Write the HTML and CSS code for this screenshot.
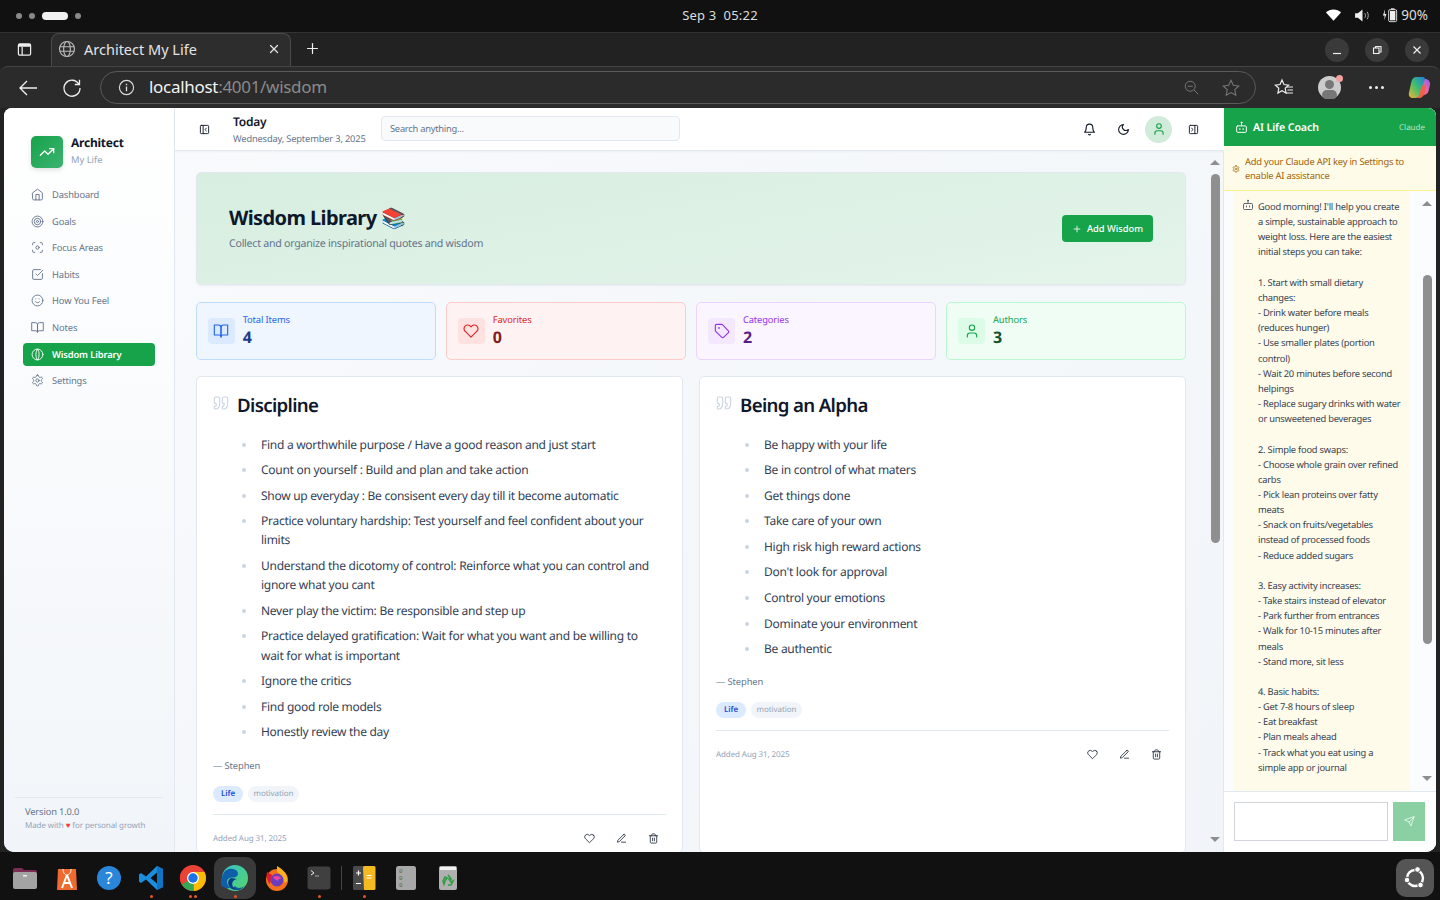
FILE: index.html
```html
<!DOCTYPE html>
<html lang="en">

<head>
    <meta charset="UTF-8">
    <meta name="viewport" content="width=device-width, initial-scale=1.0">
    <title>Architect My Life</title>
    <link rel="stylesheet" href="styles.css">
</head>

<body>

    <!-- Icon sprite -->
    <svg class="sprite" aria-hidden="true">
        <symbol id="i-home" viewBox="0 0 24 24"><path d="m3 9 9-7 9 7v11a2 2 0 0 1-2 2H5a2 2 0 0 1-2-2z"/><path d="M9 22V12h6v10"/></symbol>
        <symbol id="i-target" viewBox="0 0 24 24"><circle cx="12" cy="12" r="10"/><circle cx="12" cy="12" r="6"/><circle cx="12" cy="12" r="2"/></symbol>
        <symbol id="i-focus" viewBox="0 0 24 24"><circle cx="12" cy="12" r="3"/><path d="M3 7V5a2 2 0 0 1 2-2h2"/><path d="M17 3h2a2 2 0 0 1 2 2v2"/><path d="M21 17v2a2 2 0 0 1-2 2h-2"/><path d="M7 21H5a2 2 0 0 1-2-2v-2"/></symbol>
        <symbol id="i-check" viewBox="0 0 24 24"><path d="M21 10.5V19a2 2 0 0 1-2 2H5a2 2 0 0 1-2-2V5a2 2 0 0 1 2-2h12.5"/><path d="m9 11 3 3L22 4"/></symbol>
        <symbol id="i-smile" viewBox="0 0 24 24"><circle cx="12" cy="12" r="10"/><path d="M8 14s1.5 2 4 2 4-2 4-2"/><path d="M9 9h.01"/><path d="M15 9h.01"/></symbol>
        <symbol id="i-book" viewBox="0 0 24 24"><path d="M2 3h6a4 4 0 0 1 4 4v14a3 3 0 0 0-3-3H2z"/><path d="M22 3h-6a4 4 0 0 0-4 4v14a3 3 0 0 1 3-3h7z"/></symbol>
        <symbol id="i-lens" viewBox="0 0 24 24"><circle cx="12" cy="12" r="10"/><path d="M12 2c-4 4-4 16 0 20"/><path d="M12 2c4 4 4 16 0 20"/></symbol>
        <symbol id="i-gear" viewBox="0 0 24 24"><path d="M12.22 2h-.44a2 2 0 0 0-2 2v.18a2 2 0 0 1-1 1.73l-.43.25a2 2 0 0 1-2 0l-.15-.08a2 2 0 0 0-2.73.73l-.22.38a2 2 0 0 0 .73 2.73l.15.1a2 2 0 0 1 1 1.72v.51a2 2 0 0 1-1 1.74l-.15.09a2 2 0 0 0-.73 2.73l.22.38a2 2 0 0 0 2.73.73l.15-.08a2 2 0 0 1 2 0l.43.25a2 2 0 0 1 1 1.73V20a2 2 0 0 0 2 2h.44a2 2 0 0 0 2-2v-.18a2 2 0 0 1 1-1.73l.43-.25a2 2 0 0 1 2 0l.15.08a2 2 0 0 0 2.73-.73l.22-.39a2 2 0 0 0-.73-2.73l-.15-.08a2 2 0 0 1-1-1.74v-.5a2 2 0 0 1 1-1.74l.15-.09a2 2 0 0 0 .73-2.73l-.22-.38a2 2 0 0 0-2.73-.73l-.15.08a2 2 0 0 1-2 0l-.43-.25a2 2 0 0 1-1-1.73V4a2 2 0 0 0-2-2z"/><circle cx="12" cy="12" r="3"/></symbol>
        <symbol id="i-trend" viewBox="0 0 24 24"><path d="M22 7l-8.5 8.5-5-5L2 17"/><path d="M16 7h6v6"/></symbol>
        <symbol id="i-panel-left" viewBox="0 0 24 24"><rect x="3" y="3" width="18" height="18" rx="2"/><path d="M9 3v18"/><path d="m16 15-3-3 3-3"/></symbol>
        <symbol id="i-panel-right" viewBox="0 0 24 24"><rect x="3" y="3" width="18" height="18" rx="2"/><path d="M15 3v18"/><path d="m8 9 3 3-3 3"/></symbol>
        <symbol id="i-bell" viewBox="0 0 24 24"><path d="M6 8a6 6 0 0 1 12 0c0 7 3 9 3 9H3s3-2 3-9"/><path d="M10.3 21a1.94 1.94 0 0 0 3.4 0"/></symbol>
        <symbol id="i-moon" viewBox="0 0 24 24"><path d="M12 3a6 6 0 0 0 9 9 9 9 0 1 1-9-9Z"/></symbol>
        <symbol id="i-user" viewBox="0 0 24 24"><path d="M19 21v-2a4 4 0 0 0-4-4H9a4 4 0 0 0-4 4v2"/><circle cx="12" cy="7" r="4"/></symbol>
        <symbol id="i-heart" viewBox="0 0 24 24"><path d="M20.84 4.61a5.5 5.5 0 0 0-7.78 0L12 5.67l-1.06-1.06a5.5 5.5 0 0 0-7.78 7.78l1.06 1.06L12 21.23l7.78-7.78 1.06-1.06a5.5 5.5 0 0 0 0-7.78z"/></symbol>
        <symbol id="i-tag" viewBox="0 0 24 24"><path d="M12.586 2.586A2 2 0 0 0 11.172 2H4a2 2 0 0 0-2 2v7.172a2 2 0 0 0 .586 1.414l8.704 8.704a2.426 2.426 0 0 0 3.42 0l6.58-6.58a2.426 2.426 0 0 0 0-3.42z"/><circle cx="7.5" cy="7.5" r=".5"/></symbol>
        <symbol id="i-plus" viewBox="0 0 24 24"><path d="M5 12h14"/><path d="M12 5v14"/></symbol>
        <symbol id="i-bot" viewBox="0 0 24 24"><path d="M12 8V4"/><circle cx="12" cy="3" r="1"/><rect x="3" y="9" width="18" height="12" rx="2"/><path d="M15 14v2"/><path d="M9 14v2"/></symbol>
        <symbol id="i-quote" viewBox="0 0 24 24"><path d="M3 21c3 0 7-1 7-8V5c0-1.25-.756-2.017-2-2H4c-1.25 0-2 .75-2 1.972V11c0 1.25.75 2 2 2 1 0 1 0 1 1v1c0 1-1 2-2 2s-1 .008-1 1.031V20c0 1 0 1 1 1z"/><path d="M15 21c3 0 7-1 7-8V5c0-1.25-.757-2.017-2-2h-4c-1.25 0-2 .75-2 1.972V11c0 1.25.75 2 2 2h.75c0 2.25.25 4-2.75 4v3c0 1 0 1 1 1z"/></symbol>
        <symbol id="i-pen" viewBox="0 0 24 24"><path d="M12 20h9"/><path d="M16.5 3.5a2.121 2.121 0 0 1 3 3L7 19l-4 1 1-4L16.5 3.5z"/></symbol>
        <symbol id="i-trash" viewBox="0 0 24 24"><path d="M3 6h18"/><path d="M19 6v14c0 1-1 2-2 2H7c-1 0-2-1-2-2V6"/><path d="M8 6V4c0-1 1-2 2-2h4c1 0 2 1 2 2v2"/><path d="M10 11v6"/><path d="M14 11v6"/></symbol>
        <symbol id="i-send" viewBox="0 0 24 24"><path d="m22 2-7 20-4-9-9-4Z"/><path d="M22 2 11 13"/></symbol>
        <symbol id="i-x" viewBox="0 0 24 24"><path d="M5 5l14 14"/><path d="M19 5 5 19"/></symbol>
    </svg>

    <!-- Desktop top bar -->
    <div class="topbar">
        <div class="workspaces"><span class="ws-dot"></span><span class="ws-dot"></span><span class="ws-pill"></span><span class="ws-dot"></span></div>
        <div class="clock">Sep 3&nbsp; 05:22</div>
        <div class="status">
            <svg class="st-wifi" viewBox="0 0 16 12"><path d="M0 3.2C2 1.3 5 0 8 0s6 1.3 8 3.2L8 12z" fill="#fff"/></svg>
            <svg class="st-vol" viewBox="0 0 16 14"><path d="M0 4.5h3L8 .5v13l-5-4H0z" fill="#eee"/><path d="M10.5 4.5c1 1.5 1 3.500 0 5M13 3c1.600 2.500 1.600 5.500 0 8" fill="none" stroke="#bbb"/></svg>
            <svg class="st-bat" viewBox="0 0 18 16"><path d="M3.500 1.500 1 8.500h2l-.5 5.500L5 7H3z" fill="#eee"/><rect x="7.500" y="2" width="9" height="13.500" rx="1.500" fill="none" stroke="#eee"/><rect x="10" y=".5" width="4" height="1.500" fill="#eee"/><rect x="9" y="3.500" width="6" height="10.500" fill="#eee"/></svg>
            <span class="st-pct">90%</span>
        </div>
    </div>

    <!-- Browser tabs -->
    <div class="tabstrip">
        <svg class="tab-side" viewBox="0 0 16 16"><rect x="1.500" y="2" width="13" height="12" rx="1.500" fill="none" stroke="#eee" stroke-width="1.300"/><path d="M1.500 3.500a1.500 1.500 0 0 1 1.500-1.500h10a1.500 1.500 0 0 1 1.500 1.500V5h-13z" fill="#eee"/><path d="M5.500 5v9" stroke="#eee" stroke-width="1.300"/></svg>
        <div class="tab">
            <svg class="tab-globe" viewBox="0 0 24 24"><circle cx="12" cy="12" r="10"/><ellipse cx="12" cy="12" rx="4.500" ry="10"/><path d="M2.500 9h19M2.500 15h19"/></svg>
            <span class="tab-title">Architect My Life</span>
            <svg class="tab-x icon"><use href="#i-x"/></svg>
        </div>
        <svg class="tab-new icon"><use href="#i-plus"/></svg>
        <div class="winbtns">
            <span class="winbtn"><svg viewBox="0 0 12 12"><path d="M2 9.500h8" stroke="#eee" stroke-width="1.200"/></svg></span>
            <span class="winbtn"><svg viewBox="0 0 12 12"><rect x="2.500" y="4" width="5.500" height="5.500" fill="none" stroke="#eee" stroke-width="1.100"/><path d="M4.500 4V2.500H10V8H8" fill="none" stroke="#eee" stroke-width="1.100"/></svg></span>
            <span class="winbtn"><svg viewBox="0 0 12 12"><path d="M2.500 2.500l7 7M9.500 2.500l-7 7" stroke="#eee" stroke-width="1.200"/></svg></span>
        </div>
    </div>

    <!-- Browser toolbar -->
    <div class="frame">
        <div class="toolbar">
            <svg class="tb-back" viewBox="0 0 20 20"><path d="M19 10H2M9 3l-7 7 7 7" fill="none" stroke="#eee" stroke-width="1.400"/></svg>
            <svg class="tb-reload" viewBox="0 0 20 20"><path d="M16.800 6A8 8 0 1 0 18 10M17.500 1.800V6.500H12.800" fill="none" stroke="#eee" stroke-width="1.300"/></svg>
            <div class="addressbar">
                <svg class="ab-info" viewBox="0 0 18 18"><circle cx="9" cy="9" r="7.500" fill="none" stroke="#ddd" stroke-width="1.200"/><path d="M9 8v5M9 5v1.500" stroke="#ddd" stroke-width="1.400"/></svg>
                <span class="ab-url"><span class="ab-host">localhost</span>:4001/wisdom</span>
                <svg class="ab-zoom" viewBox="0 0 18 18"><circle cx="7.500" cy="7.500" r="6" fill="none" stroke="#777" stroke-width="1.200"/><path d="M4.500 7.500h6M12 12l5 5" stroke="#777" stroke-width="1.200"/></svg>
                <svg class="ab-star" viewBox="0 0 20 20"><path d="M10 1.500l2.600 5.500 6 .8-4.400 4.100 1.100 6L10 15l-5.300 2.900 1.100-6L1.400 7.800l6-.8z" fill="none" stroke="#777" stroke-width="1.200"/></svg>
            </div>
            <svg class="tb-favs" viewBox="0 0 20 20"><path d="M8 2l2 4.500 4.600.6-3.400 3.200.9 4.700L8 12.700 3.900 15l.9-4.700L1.400 7.100 6 6.500z" fill="none" stroke="#eee" stroke-width="1.200"/><path d="M13 9h6M13.500 12h5.500M12 15h7" stroke="#eee" stroke-width="1.100"/></svg>
            <span class="tb-avatar"><span class="av-head"></span><span class="av-body"></span><span class="av-dot"></span></span>
            <span class="tb-dots"><i></i><i></i><i></i></span>
            <svg class="tb-copilot" viewBox="0 0 24 24">
                <defs>
                    <linearGradient id="cp1" x1="0" y1="1" x2="1" y2="0"><stop offset="0" stop-color="#f5b52e"/><stop offset=".5" stop-color="#3ebf6e"/><stop offset="1" stop-color="#1d7fe0"/></linearGradient>
                    <linearGradient id="cp2" x1="0" y1="1" x2="1" y2="0"><stop offset="0" stop-color="#f0533c"/><stop offset=".5" stop-color="#e668a8"/><stop offset="1" stop-color="#8a5cf0"/></linearGradient>
                </defs>
                <path d="M15 3 18 3C21 3 23.500 5.500 23 9L21.500 15.500C20.900 18.500 18.500 20 16 20H11L14 10z" fill="url(#cp2)"/>
                <path d="M9 1h6.500c1.500 0 2.500 1 2 2.500L13 19c-.7 2.500-2.500 4-5 4H5C2 23 .3 20.500 1 17.500L3.500 6C4.200 3 6 1 9 1z" fill="url(#cp1)"/>
                <path d="M14 10h5l-2 8c-.5 2.500-2 4.500-4.500 5h-5c2.500-.5 4-2 4.700-4.500z" fill="#f0604c"/>
            </svg>
        </div>

        <!-- App window -->
        <div class="app">
            <aside class="sidebar">
                <div class="brand">
                    <span class="brand-mark"><svg class="icon"><use href="#i-trend"/></svg></span>
                    <div>
                        <div class="brand-name">Architect</div>
                        <div class="brand-sub">My Life</div>
                    </div>
                </div>
                <nav class="nav">
                    <a class="nav-item"><svg class="icon"><use href="#i-home"/></svg>Dashboard</a>
                    <a class="nav-item"><svg class="icon"><use href="#i-target"/></svg>Goals</a>
                    <a class="nav-item"><svg class="icon"><use href="#i-focus"/></svg>Focus Areas</a>
                    <a class="nav-item"><svg class="icon"><use href="#i-check"/></svg>Habits</a>
                    <a class="nav-item"><svg class="icon"><use href="#i-smile"/></svg>How You Feel</a>
                    <a class="nav-item"><svg class="icon"><use href="#i-book"/></svg>Notes</a>
                    <a class="nav-item active"><svg class="icon"><use href="#i-lens"/></svg>Wisdom Library</a>
                    <a class="nav-item"><svg class="icon"><use href="#i-gear"/></svg>Settings</a>
                </nav>
                <div class="side-foot">
                    <div class="version">Version 1.0.0</div>
                    <div class="made">Made with <span class="made-heart">♥</span> for personal growth</div>
                </div>
            </aside>

            <div class="main">
                <header class="header">
                    <svg class="icon hd-icon hd-panel"><use href="#i-panel-left"/></svg>
                    <div class="today">
                        <div class="today-title">Today</div>
                        <div class="today-date">Wednesday, September 3, 2025</div>
                    </div>
                    <input class="search" type="text" placeholder="Search anything...">
                    <div class="hd-actions">
                        <svg class="icon hd-icon"><use href="#i-bell"/></svg>
                        <svg class="icon hd-icon"><use href="#i-moon"/></svg>
                        <span class="hd-user"><svg class="icon"><use href="#i-user"/></svg></span>
                        <svg class="icon hd-icon"><use href="#i-panel-right"/></svg>
                    </div>
                </header>

                <div class="main-body">
                    <div class="content">
                        <section class="hero">
                            <div>
                                <h1>Wisdom Library 📚</h1>
                                <p>Collect and organize inspirational quotes and wisdom</p>
                            </div>
                            <button class="btn-add"><svg class="icon"><use href="#i-plus"/></svg>Add Wisdom</button>
                        </section>

                        <section class="stats">
                            <div class="stat stat-blue">
                                <span class="stat-icon"><svg class="icon"><use href="#i-book"/></svg></span>
                                <div><div class="stat-label">Total Items</div><div class="stat-value">4</div></div>
                            </div>
                            <div class="stat stat-red">
                                <span class="stat-icon"><svg class="icon"><use href="#i-heart"/></svg></span>
                                <div><div class="stat-label">Favorites</div><div class="stat-value">0</div></div>
                            </div>
                            <div class="stat stat-purple">
                                <span class="stat-icon"><svg class="icon"><use href="#i-tag"/></svg></span>
                                <div><div class="stat-label">Categories</div><div class="stat-value">2</div></div>
                            </div>
                            <div class="stat stat-green">
                                <span class="stat-icon"><svg class="icon"><use href="#i-user"/></svg></span>
                                <div><div class="stat-label">Authors</div><div class="stat-value">3</div></div>
                            </div>
                        </section>

                        <section class="cards">
                            <article class="card">
                                <h2><svg class="icon quote"><use href="#i-quote"/></svg>Discipline</h2>
                                <ul>
                                    <li>Find a worthwhile purpose / Have a good reason and just start</li>
                                    <li>Count on yourself : Build and plan and take action</li>
                                    <li>Show up everyday : Be consisent every day till it become automatic</li>
                                    <li>Practice voluntary hardship: Test yourself and feel confident about your limits</li>
                                    <li>Understand the dicotomy of control: Reinforce what you can control and ignore what you cant</li>
                                    <li>Never play the victim: Be responsible and step up</li>
                                    <li>Practice delayed gratification: Wait for what you want and be willing to wait for what is important</li>
                                    <li>Ignore the critics</li>
                                    <li>Find good role models</li>
                                    <li>Honestly review the day</li>
                                </ul>
                                <div class="author">— Stephen</div>
                                <div class="tags"><span class="tag tag-life">Life</span><span class="tag">motivation</span></div>
                                <div class="card-foot">
                                    <span class="added">Added Aug 31, 2025</span>
                                    <div class="card-actions">
                                        <svg class="icon"><use href="#i-heart"/></svg>
                                        <svg class="icon"><use href="#i-pen"/></svg>
                                        <svg class="icon"><use href="#i-trash"/></svg>
                                    </div>
                                </div>
                            </article>
                            <article class="card">
                                <h2><svg class="icon quote"><use href="#i-quote"/></svg>Being an Alpha</h2>
                                <ul>
                                    <li>Be happy with your life</li>
                                    <li>Be in control of what maters</li>
                                    <li>Get things done</li>
                                    <li>Take care of your own</li>
                                    <li>High risk high reward actions</li>
                                    <li>Don't look for approval</li>
                                    <li>Control your emotions</li>
                                    <li>Dominate your environment</li>
                                    <li>Be authentic</li>
                                </ul>
                                <div class="author">— Stephen</div>
                                <div class="tags"><span class="tag tag-life">Life</span><span class="tag">motivation</span></div>
                                <div class="card-foot">
                                    <span class="added">Added Aug 31, 2025</span>
                                    <div class="card-actions">
                                        <svg class="icon"><use href="#i-heart"/></svg>
                                        <svg class="icon"><use href="#i-pen"/></svg>
                                        <svg class="icon"><use href="#i-trash"/></svg>
                                    </div>
                                </div>
                            </article>
                        </section>
                    </div>
                    <div class="scrollbar scrollbar-main">
                        <span class="arrow-up"></span>
                        <span class="thumb"></span>
                        <span class="arrow-down"></span>
                    </div>
                </div>
            </div>

            <!-- Coach panel -->
            <aside class="coach">
                <div class="coach-head">
                    <svg class="icon"><use href="#i-bot"/></svg>
                    <span class="coach-title">AI Life Coach</span>
                    <span class="coach-model">Claude</span>
                </div>
                <div class="coach-warn">
                    <svg class="icon"><use href="#i-gear"/></svg>
                    <span>Add your Claude API key in Settings to<br>enable AI assistance</span>
                </div>
                <div class="coach-body">
                    <div class="bubble">
                        <svg class="icon"><use href="#i-bot"/></svg>
                        <p>Good morning! I'll help you create
a simple, sustainable approach to
weight loss. Here are the easiest
initial steps you can take:

1. Start with small dietary
changes:
- Drink water before meals
(reduces hunger)
- Use smaller plates (portion
control)
- Wait 20 minutes before second
helpings
- Replace sugary drinks with water
or unsweetened beverages

2. Simple food swaps:
- Choose whole grain over refined
carbs
- Pick lean proteins over fatty
meats
- Snack on fruits/vegetables
instead of processed foods
- Reduce added sugars

3. Easy activity increases:
- Take stairs instead of elevator
- Park further from entrances
- Walk for 10-15 minutes after
meals
- Stand more, sit less

4. Basic habits:
- Get 7-8 hours of sleep
- Eat breakfast
- Plan meals ahead
- Track what you eat using a
simple app or journal</p>
                    </div>
                    <div class="scrollbar scrollbar-coach">
                        <span class="arrow-up"></span>
                        <span class="thumb"></span>
                        <span class="arrow-down"></span>
                    </div>
                </div>
                <div class="coach-input">
                    <textarea class="coach-text"></textarea>
                    <button class="coach-send"><svg class="icon"><use href="#i-send"/></svg></button>
                </div>
            </aside>
        </div>
    </div>

    <!-- Dock -->
    <div class="dock">
        <div class="dock-apps">
            <span class="dock-app">
                <svg viewBox="0 0 28 28"><path d="M2 6a2 2 0 0 1 2-2h7l2 2h11a2 2 0 0 1 2 2v4H2z" fill="#7c2d54"/><rect x="2" y="8" width="24" height="17" rx="2" fill="#a3a3a3"/><rect x="12" y="11" width="4" height="1.500" fill="#eee"/></svg>
            </span>
            <span class="dock-app">
                <svg viewBox="0 0 28 28"><path d="M5 5h18l1 21H4z" fill="#ef6a2e"/><path d="M10 5c0 4 2 6 4 6s4-2 4-6" fill="none" stroke="#fff" stroke-width="1"/><path d="M14 11l-5 13M14 11l5 13M10.500 19h7" fill="none" stroke="#fff" stroke-width="2"/></svg>
            </span>
            <span class="dock-app">
                <svg viewBox="0 0 28 28"><circle cx="14" cy="14" r="12" fill="#2a86d8"/><text x="14" y="20" text-anchor="middle" font-family="Noto Sans" font-size="17" fill="#fff">?</text></svg>
            </span>
            <span class="dock-app has-dot">
                <svg viewBox="0 0 28 28"><path d="M20 2l6 3v18l-6 3-11-10.500L4 19l-2-1.500v-7L4 9l5 3.500zM20 8.500l-6.500 5.500 6.500 5.500z" fill="#1b8ee0"/><path d="M20 2l6 3v18l-6 3z" fill="#0f74c4"/></svg>
            </span>
            <span class="dock-app has-dot2">
                <svg viewBox="0 0 28 28"><circle cx="14" cy="14" r="13" fill="#ea4335"/><path d="M14 14 2.700 20.500A13 13 0 0 1 2.700 7.500z" fill="#ea4335"/><path d="M14 14 2.800 20.500A13 13 0 0 0 14 27h2z" fill="#34a853"/><path d="M14 8h11.500A13 13 0 0 1 15 27z" fill="#fbbc04"/><circle cx="14" cy="14" r="6" fill="#fff"/><circle cx="14" cy="14" r="4.700" fill="#1a73e8"/></svg>
            </span>
            <span class="dock-app dock-active has-dot">
                <svg viewBox="0 0 28 28"><defs><linearGradient id="edge1" x1="0" y1="0" x2="1" y2="1"><stop offset="0" stop-color="#36c3c7"/><stop offset="1" stop-color="#55d46a"/></linearGradient></defs><circle cx="14" cy="14" r="13" fill="url(#edge1)"/><path d="M1 14C2 6 8 4 12 5c5 1 6 5 4 7-3 3-6 0-9 3-2 2-1 8 4 10 4 1.500 9 1 13-3-5 3-9 2-10 0-3 3-15 5-18-8z" fill="#0f5fa8"/><path d="M10 14c-4 2-4 8 1 11 4 1.500 8 1 11-1-5 2-9 1-10-1-1.500-3-1-7 4-8z" fill="#0b3f85"/></svg>
            </span>
            <span class="dock-app">
                <svg viewBox="0 0 28 28"><circle cx="14" cy="16" r="11" fill="#f5701c"/><path d="M14 2c3 2 9 5 10 12 1 5-2 6-4 2-1-4-4-7-6-8z" fill="#fbb31d"/><path d="M4 8c-1 4 0 9 3 12l2-9z" fill="#e6162d"/><circle cx="14" cy="16" r="6.500" fill="#6a3cc0"/><path d="M10 13c3-2 7-1 9 2-2-1-4 0-4 2-2-1-4-2-5-4z" fill="#f0459f"/></svg>
            </span>
            <span class="dock-app has-dot">
                <svg viewBox="0 0 28 28"><rect x="2.500" y="2.500" width="23" height="23" rx="3" fill="#404040"/><path d="M6 6.500 9 9l-3 2" fill="none" stroke="#eee" stroke-width="1"/><path d="M10 12h4" stroke="#aaa" stroke-width="1"/></svg>
            </span>
            <span class="dock-sep"></span>
            <span class="dock-app has-dot">
                <svg viewBox="0 0 28 28"><rect x="3" y="2" width="11.500" height="24" rx="1.500" fill="#4a4a4a"/><path d="M13 3.500a1.500 1.500 0 0 1 1.500-1.500H24a1.500 1.500 0 0 1 1.500 1.500v21a1.500 1.500 0 0 1-1.500 1.500h-10z" fill="#f5b921"/><path d="M6 9h5M8.500 6.500v5M6 19.500h5M16.500 11.500h5M16.500 14h5" stroke="#fff" stroke-width="1.200"/></svg>
            </span>
            <span class="dock-app">
                <svg viewBox="0 0 28 28"><rect x="4" y="2" width="20" height="24" rx="2.500" fill="#a8a8a8"/><text x="7" y="9" font-family="Liberation Mono" font-size="6" fill="#59681f">0</text><text x="7" y="16" font-family="Liberation Mono" font-size="6" fill="#59681f">0</text><text x="7" y="23" font-family="Liberation Mono" font-size="6" fill="#59681f">0</text></svg>
            </span>
            <span class="dock-app">
                <svg viewBox="0 0 28 28"><rect x="5" y="2" width="18" height="24" rx="2" fill="#b0b0b0"/><rect x="6" y="3" width="16" height="3" fill="#f0f0f0"/><path d="M14 11l3 4h-2l2 3 2-1-2 4h-3M10 20l-1-3 2-4 2 1-2 3z" fill="none" stroke="#2f9e44" stroke-width="1.600"/></svg>
            </span>
        </div>
        <span class="dock-grid">
            <svg viewBox="0 0 24 24"><circle cx="12" cy="12" r="8" fill="none" stroke="#fff" stroke-width="2.400"/><circle cx="14.500" cy="3.500" r="2.800" fill="#fff" stroke="#555" stroke-width="1"/><circle cx="4" cy="14" r="2.800" fill="#fff" stroke="#555" stroke-width="1"/><circle cx="17.500" cy="19" r="2.800" fill="#fff" stroke="#555" stroke-width="1"/></svg>
        </span>
    </div>

</body>

</html>
```
FILE: styles.css
```css
* {
    box-sizing: border-box;
}

body {
    font-family: "Noto Sans", "Open Sans", sans-serif;
    margin: 0;
    padding: 0;
    width: 1440px;
    height: 900px;
    overflow: hidden;
    display: flex;
    flex-direction: column;
    background-color: #111;
    color: #0f172a;
}

.sprite {
    display: none;
}

.icon {
    fill: none;
    stroke: currentColor;
    stroke-width: 2;
    stroke-linecap: round;
    stroke-linejoin: round;
    flex-shrink: 0;
}

/* Desktop top bar */
.topbar {
    height: 32px;
    flex-shrink: 0;
    background: #111;
    color: #ddd;
    position: relative;
    display: flex;
    align-items: center;
    justify-content: space-between;
    padding: 0 12px 2px 16px;
}

.workspaces {
    display: flex;
    align-items: center;
    gap: 7px;
    padding-top: 2px;
}

.ws-dot {
    width: 6px;
    height: 6px;
    border-radius: 50%;
    background: #8a8a8a;
}

.ws-pill {
    width: 26px;
    height: 8px;
    border-radius: 4px;
    background: #f0f0f0;
}

.clock {
    position: absolute;
    left: 0;
    right: 0;
    text-align: center;
    font-size: 13px;
    letter-spacing: 0.2px;
}

.status {
    display: flex;
    align-items: center;
}

.st-wifi {
    width: 15px;
    height: 12px;
    margin-right: 14px;
}

.st-vol {
    width: 15px;
    height: 13px;
    margin-right: 12px;
}

.st-bat {
    width: 16px;
    height: 16px;
    margin-right: 3px;
}

.st-pct {
    font-size: 13.500px;
}

/* Tabs */
.tabstrip {
    height: 34px;
    flex-shrink: 0;
    background: #222;
    border-top: 1px solid #333;
    display: flex;
    align-items: center;
    padding-left: 17px;
    color: #eee;
}

.tab-side {
    width: 15px;
    height: 15px;
    margin-right: 19px;
}

.tab {
    width: 240px;
    height: 34px;
    margin-top: 1px;
    background: #2d2d2d;
    border: 1px solid #4a4a4a;
    border-bottom: none;
    border-radius: 8px 8px 0 0;
    display: flex;
    align-items: center;
    padding: 0 10px 4px 6px;
    color: #e4e4e4;
}

.tab-globe {
    width: 18px;
    height: 18px;
    fill: none;
    stroke: #bbb;
    stroke-width: 1.500;
    margin-right: 8px;
}

.tab-title {
    font-size: 14.500px;
    flex: 1;
}

.tab-x {
    width: 12px;
    height: 12px;
    stroke-width: 2.500;
}

.tab-new {
    width: 17px;
    height: 17px;
    margin-left: 13px;
    margin-bottom: 2px;
    stroke-width: 1.700;
}

.winbtns {
    margin-left: auto;
    display: flex;
    gap: 16px;
    padding-right: 11px;
}

.winbtn {
    width: 24px;
    height: 24px;
    border-radius: 50%;
    background: #3a3a3a;
    display: flex;
    align-items: center;
    justify-content: center;
}

.winbtn svg {
    width: 12px;
    height: 12px;
}

/* Browser frame */
.frame {
    flex: 1;
    min-height: 0;
    background: #222;
    display: flex;
    flex-direction: column;
}

.toolbar {
    height: 42px;
    flex-shrink: 0;
    background: #2b2b2b;
    border-radius: 8px 8px 0 0;
    border-top: 1px solid #444;
    display: flex;
    align-items: center;
    padding-left: 18px;
    color: #eee;
}

.tb-back {
    width: 20px;
    height: 20px;
    margin-right: 24px;
}

.tb-reload {
    width: 20px;
    height: 20px;
    margin-right: 18px;
}

.addressbar {
    width: 1156px;
    height: 33px;
    border: 1px solid #5a5a5a;
    border-radius: 17px;
    display: flex;
    align-items: center;
    padding: 0 15px 0 17px;
}

.ab-info {
    width: 17px;
    height: 17px;
    margin-right: 14px;
}

.ab-url {
    flex: 1;
    font-size: 17px;
    letter-spacing: -0.3px;
    padding-bottom: 2px;
    color: #8a8a8a;
}

.ab-host {
    color: #f2f2f2;
}

.ab-zoom {
    width: 15px;
    height: 15px;
    margin-right: 23px;
}

.ab-star {
    width: 18px;
    height: 18px;
}

.tb-favs {
    width: 20px;
    height: 20px;
    margin-left: 18px;
}

.tb-avatar {
    width: 23px;
    height: 23px;
    border-radius: 50%;
    background: #ccc;
    position: relative;
    margin-left: 24px;
}

.av-head {
    position: absolute;
    left: 7px;
    top: 4px;
    width: 9px;
    height: 9px;
    border-radius: 50%;
    background: #777;
}

.av-body {
    position: absolute;
    left: 4px;
    top: 14px;
    width: 15px;
    height: 9px;
    border-radius: 8px 8px 7px 7px;
    background: #777;
}

.av-dot {
    position: absolute;
    right: -2px;
    top: -1px;
    width: 7px;
    height: 7px;
    border-radius: 50%;
    background: #f3a0a0;
}

.tb-dots {
    display: flex;
    gap: 3px;
    margin-left: 28px;
}

.tb-dots i {
    width: 3px;
    height: 3px;
    border-radius: 50%;
    background: #eee;
}

.tb-copilot {
    width: 23px;
    height: 23px;
    margin-left: 24px;
}

/* App */
.app {
    flex: 1;
    min-height: 0;
    margin: 0 4px;
    display: flex;
    background: #fff;
    border-radius: 8px 8px 10px 10px;
    overflow: hidden;
    text-rendering: geometricPrecision;
}

.sidebar {
    width: 171px;
    flex-shrink: 0;
    background: linear-gradient(180deg, #fff 0%, #f8fafc 50%, #f1f5f9 100%);
    border-right: 1px solid #e2e8f0;
    display: flex;
    flex-direction: column;
    padding: 27px 11px 0;
}

.brand {
    display: flex;
    align-items: center;
    gap: 8px;
    padding-left: 16px;
    margin-bottom: 15px;
}

.brand-mark {
    width: 32px;
    height: 32px;
    border-radius: 5px;
    background: linear-gradient(135deg, #16a34a, #3cb371);
    color: #fff;
    box-shadow: 0 2px 5px rgba(0, 0, 0, 0.12);
    display: flex;
    align-items: center;
    justify-content: center;
}

.brand-mark svg {
    width: 16px;
    height: 16px;
}

.brand-name {
    font-size: 12px;
    font-weight: 700;
    line-height: 16px;
    letter-spacing: -0.02em;
}

.brand-sub {
    font-size: 9.330px;
    color: #94a3b8;
    line-height: 17px;
}

.nav {
    display: flex;
    flex-direction: column;
    gap: 3.600px;
    padding: 0 8px;
}

.nav-item {
    height: 23px;
    display: flex;
    align-items: center;
    gap: 8px;
    padding-left: 8px;
    border-radius: 4px;
    font-size: 9.330px;
    letter-spacing: -0.12px;
    color: #64748b;
}

.nav-item svg {
    width: 13px;
    height: 13px;
    stroke-width: 1.700;
}

.nav-item.active {
    background: #16a34a;
    color: #fff;
    font-weight: 600;
}

.side-foot {
    margin-top: auto;
    border-top: 1px solid #e2e8f0;
    padding: 7px 0 21px 10px;
    height: 55px;
}

.version {
    font-size: 9.330px;
    letter-spacing: -0.15px;
    color: #64748b;
    line-height: 14px;
}

.made {
    font-size: 8px;
    color: #94a3b8;
    line-height: 14px;
    white-space: nowrap;
    letter-spacing: -0.09px;
}

.made-heart {
    color: #ef4444;
}

.main {
    flex: 1;
    min-width: 0;
    display: flex;
    flex-direction: column;
    background: linear-gradient(135deg, #f8fafc, #f1f5f9);
}

.header {
    height: 43px;
    flex-shrink: 0;
    background: #fff;
    border-bottom: 1px solid #e2e8f0;
    box-shadow: 0 1px 2px rgba(15, 23, 42, 0.04);
    display: flex;
    align-items: center;
    padding: 0 25.500px 0 24px;
}

.hd-icon {
    width: 11px;
    height: 11px;
    color: #111827;
}

.hd-panel {
    margin-right: 23px;
}

.today {
    width: 132px;
    padding-top: 2px;
    white-space: nowrap;
}

.today-title {
    font-size: 12px;
    font-weight: 600;
    line-height: 16px;
    padding-bottom: 2px;
    letter-spacing: -0.02em;
}

.today-date {
    font-size: 9.330px;
    line-height: 14px;
    color: #64748b;
    letter-spacing: -0.18px;
}

.search {
    width: 299px;
    height: 25px;
    margin-left: 16px;
    margin-bottom: 2px;
    background: #f8fafc;
    border: 1px solid #e2e8f0;
    border-radius: 4px;
    padding: 0 8px;
    font-family: inherit;
    font-size: 9.330px;
    letter-spacing: -0.25px;
}

.search::placeholder {
    color: #64748b;
}

.hd-actions {
    margin-left: auto;
    display: flex;
    align-items: center;
}

.hd-actions .hd-icon {
    width: 13px;
    height: 13px;
}

.hd-actions .hd-icon:nth-child(1) {
    margin-right: 21px;
}

.hd-actions .hd-icon:nth-child(2) {
    margin-right: 15px;
}

.hd-actions .hd-icon:nth-child(4) {
    width: 11px;
    height: 11px;
    margin-left: 15.500px;
}

.hd-user {
    width: 27px;
    height: 27px;
    border-radius: 50%;
    background: #d1ebda;
    color: #16a34a;
    display: flex;
    align-items: center;
    justify-content: center;
}

.hd-user svg {
    width: 14px;
    height: 14px;
}

.main-body {
    flex: 1;
    min-height: 0;
    display: flex;
}

.content {
    flex: 1;
    min-width: 0;
    overflow: hidden;
    padding: 21px 21px 0;
}

.hero {
    height: 113px;
    background: linear-gradient(170deg, #d7eee0, #e4f4ea);
    border: 1px solid #e2e8f0;
    border-radius: 5px;
    box-shadow: 0 1px 2px rgba(0, 0, 0, 0.05);
    display: flex;
    align-items: center;
    justify-content: space-between;
    padding: 0 32px 3px;
}

.hero h1 {
    margin: 0;
    font-size: 20px;
    line-height: 28px;
    font-weight: 700;
    letter-spacing: -0.03em;
}

.hero p {
    margin: 5px 0 0;
    font-size: 10.670px;
    line-height: 14px;
    color: #64748b;
    letter-spacing: -0.27px;
}

.btn-add {
    height: 27px;
    width: 91px;
    margin-top: 3px;
    background: #16a34a;
    color: #fff;
    border: none;
    border-radius: 4px;
    font-family: inherit;
    font-size: 9.330px;
    font-weight: 500;
    display: flex;
    align-items: center;
    justify-content: center;
    gap: 5px;
}

.btn-add svg {
    width: 10px;
    height: 10px;
}

.stats {
    display: grid;
    grid-template-columns: repeat(4, 1fr);
    gap: 10.500px;
    margin-top: 17px;
}

.stat {
    height: 58px;
    border: 1px solid;
    border-radius: 5px;
    display: flex;
    align-items: center;
    gap: 8px;
    padding-left: 11px;
}

.stat-icon {
    width: 26.670px;
    height: 26.670px;
    border-radius: 4px;
    display: flex;
    align-items: center;
    justify-content: center;
}

.stat-icon svg {
    width: 16px;
    height: 16px;
    stroke-width: 1.700;
}

.stat-label {
    font-size: 9.330px;
    line-height: 13px;
    margin-top: -1px;
    padding-bottom: 1px;
    letter-spacing: -0.12px;
}

.stat-value {
    font-size: 16px;
    font-weight: 700;
    line-height: 21px;
}

.stat-blue {
    background: #eff6ff;
    border-color: #bfdbfe;
}

.stat-blue .stat-icon {
    background: #dbeafe;
    color: #2563eb;
}

.stat-blue .stat-label {
    color: #2563eb;
}

.stat-blue .stat-value {
    color: #1e3a8a;
}

.stat-red {
    background: #fef2f2;
    border-color: #fecaca;
}

.stat-red .stat-icon {
    background: #fee2e2;
    color: #dc2626;
}

.stat-red .stat-label {
    color: #dc2626;
}

.stat-red .stat-value {
    color: #7f1d1d;
}

.stat-purple {
    background: #faf5ff;
    border-color: #e9d5ff;
}

.stat-purple .stat-icon {
    background: #f3e8ff;
    color: #9333ea;
}

.stat-purple .stat-label {
    color: #9333ea;
}

.stat-purple .stat-value {
    color: #581c87;
}

.stat-green {
    background: #f0fdf4;
    border-color: #bbf7d0;
}

.stat-green .stat-icon {
    background: #dcfce7;
    color: #16a34a;
}

.stat-green .stat-label {
    color: #16a34a;
}

.stat-green .stat-value {
    color: #14532d;
}

.cards {
    display: grid;
    grid-template-columns: 1fr 1fr;
    gap: 16px;
    margin-top: 16px;
}

.card {
    background: #fff;
    border: 1px solid #e2e8f0;
    border-radius: 5px;
    padding: 17px 16px 8px;
}

.card h2 {
    margin: 0;
    display: flex;
    align-items: center;
    font-size: 18.670px;
    line-height: 24px;
    font-weight: 600;
    color: #0f172a;
    height: 24px;
    letter-spacing: -0.035em;
}

.quote {
    width: 16px;
    height: 16px;
    color: #cbd5e1;
    stroke-width: 1.700;
    margin-right: 8px;
    margin-top: -6px;
}

.card ul {
    margin: 0;
    padding: 16.500px 8px 0 48px;
    list-style: none;
}

.card li {
    position: relative;
    font-size: 12px;
    line-height: 19.200px;
    color: #334155;
    margin-bottom: 6.400px;
    letter-spacing: -0.27px;
}

.card li::before {
    content: "";
    position: absolute;
    left: -19px;
    top: 8px;
    width: 4px;
    height: 4px;
    border-radius: 50%;
    background: #cbd5e1;
}

.author {
    font-size: 9.330px;
    line-height: 14px;
    color: #64748b;
    margin-top: 17px;
    letter-spacing: -0.1px;
}

.tags {
    display: flex;
    gap: 5px;
    margin-top: 13px;
    margin-bottom: 12px;
}

.tag {
    height: 16px;
    padding: 0 5.500px;
    border-radius: 8px;
    background: #f1f5f9;
    color: #94a3b8;
    font-size: 8px;
    line-height: 16px;
    letter-spacing: -0.06px;
}

.tag-life {
    background: #dbeafe;
    color: #1d4ed8;
    font-weight: 600;
    padding: 0 8px;
}

.card-foot {
    border-top: 1px solid #e2e8f0;
    display: flex;
    align-items: center;
    justify-content: space-between;
    padding-top: 18px;
}

.added {
    font-size: 8px;
    color: #94a3b8;
    letter-spacing: -0.1px;
}

.card-actions {
    display: flex;
    gap: 21px;
    padding-right: 7px;
    color: #1f2937;
}

.card-actions svg {
    width: 11px;
    height: 11px;
    stroke-width: 1.800;
}

/* Fake scrollbars */
.scrollbar {
    width: 17px;
    flex-shrink: 0;
    display: flex;
    flex-direction: column;
    align-items: center;
}

.scrollbar-main {
    border-right: 1px solid #e2e8f0;
    padding-top: 9px;
}

.arrow-up {
    width: 0;
    height: 0;
    border-left: 5px solid transparent;
    border-right: 5px solid transparent;
    border-bottom: 5px solid #8f8f8f;
}

.arrow-down {
    width: 0;
    height: 0;
    border-left: 5px solid transparent;
    border-right: 5px solid transparent;
    border-top: 5px solid #8f8f8f;
}

.thumb {
    width: 9px;
    border-radius: 5px;
    background: #8f8f8f;
}

.scrollbar-main .thumb {
    height: 369px;
    margin-top: 9px;
}

.scrollbar-main .arrow-down {
    margin-top: auto;
    margin-bottom: 10px;
}

/* Coach panel */
.coach {
    width: 212px;
    flex-shrink: 0;
    display: flex;
    flex-direction: column;
    background: #fff;
}

.coach-head {
    height: 38px;
    flex-shrink: 0;
    background: #16a34a;
    color: #fff;
    display: flex;
    align-items: center;
    padding: 1px 11px 0 11px;
}

.coach-head svg {
    width: 13px;
    height: 13px;
    stroke-width: 1.800;
    margin-right: 5px;
}

.coach-title {
    font-size: 10.670px;
    font-weight: 600;
    flex: 1;
    letter-spacing: -0.12px;
}

.coach-model {
    font-size: 8px;
    color: #b9e4c8;
}

.coach-warn {
    height: 45px;
    flex-shrink: 0;
    background: #fefce8;
    border-bottom: 1px solid #fef08a;
    display: flex;
    align-items: center;
    gap: 5px;
    padding: 2px 8px 0;
    color: #a16207;
    font-size: 9.330px;
    line-height: 14px;
    letter-spacing: -0.21px;
}

.coach-warn svg {
    width: 8px;
    height: 8px;
}

.coach-body {
    flex: 1;
    min-height: 0;
    overflow: hidden;
    background: #fbfcfd;
    display: flex;
    justify-content: space-between;
    padding-left: 10px;
}

.bubble {
    width: 176px;
    background: #fefbea;
    display: flex;
    gap: 4px;
    padding: 8px 0 0 8px;
    color: #374151;
}

.bubble svg {
    width: 12px;
    height: 12px;
    stroke-width: 1.800;
    color: #4b5563;
}

.bubble p {
    margin: 0;
    white-space: pre;
    font-size: 9.330px;
    line-height: 15.160px;
    letter-spacing: -0.23px;
}

.scrollbar-coach {
    width: 14px;
    margin-right: 2px;
    padding-top: 10px;
}

.scrollbar-coach .thumb {
    height: 369px;
    margin-top: 69px;
}

.scrollbar-coach .arrow-down {
    margin-top: auto;
    margin-bottom: 10px;
}

.coach-input {
    height: 61px;
    flex-shrink: 0;
    border-top: 1px solid #e2e8f0;
    background: #fff;
    display: flex;
    gap: 5px;
    padding: 10px 11px 0 10px;
}

.coach-text {
    width: 154px;
    height: 39px;
    border: 1px solid #d1d5db;
    resize: none;
}

.coach-send {
    width: 32px;
    height: 39px;
    background: #8ad0a3;
    border: none;
    color: #fff;
    padding: 0;
    display: flex;
    align-items: center;
    justify-content: center;
}

.coach-send svg {
    width: 11px;
    height: 11px;
    stroke-width: 1.500;
}

/* Dock */
.dock {
    height: 44px;
    flex-shrink: 0;
    background: #111;
    margin-top: 4px;
    display: flex;
    align-items: center;
    justify-content: space-between;
    padding: 0 6px 0 4px;
}

.dock-apps {
    display: flex;
    align-items: center;
}

.dock-app {
    width: 42px;
    height: 42px;
    display: flex;
    align-items: center;
    justify-content: center;
    border-radius: 10px;
    position: relative;
}

.dock-app svg {
    width: 28px;
    height: 28px;
}

.dock-active {
    background: #3a3a3a;
}

.has-dot::after,
.has-dot2::after {
    content: "";
    position: absolute;
    bottom: 1px;
    left: 50%;
    margin-left: -1.500px;
    width: 3px;
    height: 3px;
    border-radius: 50%;
    background: #e8561f;
}

.has-dot2::after {
    margin-left: -4px;
    box-shadow: 5px 0 0 #e8561f;
}

.dock-sep {
    width: 1px;
    height: 24px;
    background: #444;
    margin: 0 1px;
}

.dock-grid {
    width: 38px;
    height: 38px;
    border-radius: 10px;
    background: #555;
    display: flex;
    align-items: center;
    justify-content: center;
}

.dock-grid svg {
    width: 24px;
    height: 24px;
}
```
